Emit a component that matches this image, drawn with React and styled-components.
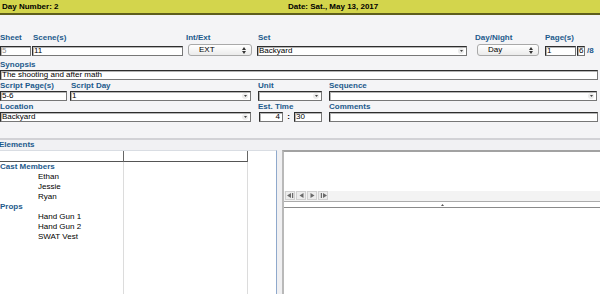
import React from "react";
import styled, { createGlobalStyle } from "styled-components";

const GlobalStyle = createGlobalStyle`
  html, body {
    margin: 0;
    padding: 0;
    background: #f4f4f6;
  }
  body {
    font-family: "Liberation Sans", Arial, sans-serif;
    font-size: 8px;
    color: #000;
    overflow: hidden;
  }
`;

const Page = styled.div`
  width: 600px;
  height: 294px;
  display: flex;
  flex-direction: column;
  overflow: hidden;
`;

const Header = styled.div`
  height: 13px;
  background: #d3d54c;
  border-bottom: 2px solid #5e5e1d;
  display: grid;
  grid-template-columns: 286px 1fr;
  padding-left: 2px;
  font-weight: bold;
  line-height: 13px;
  white-space: nowrap;
`;

const Form = styled.div`
  display: flex;
  flex-direction: column;
`;

const Row = styled.div`
  display: flex;
  align-items: flex-end;
  margin-top: ${(p) => p.$mt || 0}px;
`;

const Field = styled.div`
  display: flex;
  flex-direction: column;
  width: ${(p) => p.$w}px;
  margin-left: ${(p) => p.$ml || 0}px;
`;

const Label = styled.div`
  height: 10px;
  line-height: 10px;
  font-weight: bold;
  color: #1d5a8c;
  white-space: nowrap;
  padding-left: ${(p) => p.$pl || 0}px;
`;

const Slot = styled.div`
  height: ${(p) => p.$h || 10}px;
  display: flex;
  align-items: flex-end;
`;

const Input = styled.div`
  position: relative;
  box-sizing: border-box;
  height: 10px;
  width: ${(p) => (p.$w ? `${p.$w}px` : "100%")};
  margin-left: ${(p) => p.$ml || 0}px;
  background: #fff;
  border: 1px solid #777;
  border-top-color: #2e2e2e;
  border-left-color: #2e2e2e;
  box-shadow: inset 1px 1px 0 #b5b5b5;
  line-height: 8px;
  padding: 0 ${(p) => (p.$right ? 2 : 1)}px 0 1px;
  text-align: ${(p) => (p.$right ? "right" : "left")};
  color: ${(p) => p.$muted ? "#8a8a8a" : "#000"};
  white-space: nowrap;
  overflow: hidden;
`;

const DropArrow = styled.span`
  position: absolute;
  right: 2px;
  top: 1px;
  width: 6px;
  height: 6px;
  border-radius: 3px;
  background: #ececec;
  display: flex;
  align-items: center;
  justify-content: center;
`;

const SelectButton = styled.div`
  box-sizing: border-box;
  height: 12px;
  width: ${(p) => p.$w}px;
  margin-left: 2px;
  border: 1px solid #a9a9a9;
  border-radius: 3px;
  background: linear-gradient(#ffffff, #ebebeb);
  display: flex;
  align-items: center;
  justify-content: space-between;
  padding: 0 5px 0 10px;
  line-height: 10px;
`;

const Fraction = styled.span`
  margin-left: 2px;
  color: #1d5a8c;
  font-weight: bold;
  line-height: 10px;
`;

const Colon = styled.span`
  width: 11px;
  text-align: center;
  font-weight: bold;
  line-height: 10px;
`;

const Divider = styled.div`
  margin-top: 16px;
  height: 2px;
  background: #d2d2d6;
`;

const SectionTitle = styled.div`
  height: 10px;
  line-height: 10px;
  margin-left: -1px;
  font-weight: bold;
  color: #1d5a8c;
  background: #f1f1f3;
`;

const Panels = styled.div`
  flex: 1;
  display: flex;
  min-height: 0;
`;

const ElementList = styled.div`
  width: 277px;
  box-sizing: border-box;
  background: #fff;
  border-top: 1px solid #d9dde3;
  border-right: 1px solid #8fa9cc;
  display: flex;
`;

const Column = styled.div`
  width: ${(p) => p.$w}px;
  box-sizing: border-box;
  border-right: 1px solid #dcdcdc;
`;

const HeadCell = styled.div`
  height: 10px;
  border-bottom: 1px solid #555;
  box-shadow: 1px 0 0 #666;
`;

const GroupTitle = styled.div`
  height: 10px;
  line-height: 10px;
  font-weight: bold;
  color: #1d5a8c;
  white-space: nowrap;
`;

const Item = styled.div`
  height: 10px;
  line-height: 10px;
  padding-left: 38px;
  white-space: nowrap;
`;

const Splitter = styled.div`
  width: 5px;
  background: #f0f0f2;
`;

const Viewer = styled.div`
  flex: 1;
  background: #fff;
  border-top: 2px solid #a2a2a2;
  border-left: 2px solid #b9b9b9;
  display: flex;
  flex-direction: column;
`;

const ViewerTop = styled.div`
  height: 39px;
`;

const NavBar = styled.div`
  height: 10px;
  background: #f3f3f3;
  border-bottom: 1px solid #ababab;
  display: flex;
  padding-left: 1px;
`;

const NavButton = styled.div`
  width: 10px;
  height: 9px;
  box-sizing: border-box;
  border: 1px solid #d0d0d0;
  background: #ececec;
  margin-right: 1px;
  display: flex;
  align-items: center;
  justify-content: center;
`;

const Strip = styled.div`
  height: 5px;
  border-bottom: 1px solid #8a8a8a;
  display: flex;
  justify-content: center;
  align-items: center;
`;

const UpDown = () => (
  <svg width="4" height="7" viewBox="0 0 4 7">
    <polygon points="0,3 2,0 4,3" fill="#333" />
    <polygon points="0,4 2,7 4,4" fill="#333" />
  </svg>
);

const Drop = () => (
  <DropArrow>
    <svg width="3" height="2" viewBox="0 0 3 2">
      <polygon points="0,0 3,0 1.5,2" fill="#444" />
    </svg>
  </DropArrow>
);

const NavIcon = ({ kind }) => (
  <svg width="7" height="5" viewBox="0 0 7 5">
    {kind === "first" && (
      <>
        <polygon points="0,2.5 4,0 4,5" fill="#6a6a6a" />
        <rect x="5" y="0" width="1.2" height="5" fill="#6a6a6a" />
      </>
    )}
    {kind === "prev" && <polygon points="1.5,2.5 5.5,0 5.5,5" fill="#6a6a6a" />}
    {kind === "next" && <polygon points="5.5,2.5 1.5,0 1.5,5" fill="#6a6a6a" />}
    {kind === "last" && (
      <>
        <rect x="0.8" y="0" width="1.2" height="5" fill="#6a6a6a" />
        <polygon points="7,2.5 3,0 3,5" fill="#6a6a6a" />
      </>
    )}
  </svg>
);

const cast = ["Ethan", "Jessie", "Ryan"];
const props = ["Hand Gun 1", "Hand Gun 2", "SWAT Vest"];

export default function App() {
  return (
    <>
      <GlobalStyle />
      <Page>
        <Header>
          <span>Day Number: 2</span>
          <span>Date: Sat., May 13, 2017</span>
        </Header>

        <Form>
          <Row $mt={18}>
            <Field $w={31}>
              <Label>Sheet</Label>
              <Slot $h={13}>
                <Input $muted>5</Input>
              </Slot>
            </Field>
            <Field $w={151} $ml={1}>
              <Label $pl={1}>Scene(s)</Label>
              <Slot $h={13}>
                <Input>11</Input>
              </Slot>
            </Field>
            <Field $w={66} $ml={3}>
              <Label>Int/Ext</Label>
              <Slot $h={13}>
                <SelectButton $w={64}>
                  <span>EXT</span>
                  <UpDown />
                </SelectButton>
              </Slot>
            </Field>
            <Field $w={210} $ml={5}>
              <Label $pl={1}>Set</Label>
              <Slot $h={13}>
                <Input>
                  Backyard
                  <Drop />
                </Input>
              </Slot>
            </Field>
            <Field $w={64} $ml={8}>
              <Label>Day/Night</Label>
              <Slot $h={13}>
                <SelectButton $w={62}>
                  <span>Day</span>
                  <UpDown />
                </SelectButton>
              </Slot>
            </Field>
            <Field $w={55} $ml={6}>
              <Label>Page(s)</Label>
              <Slot $h={13}>
                <Input $w={31}>1</Input>
                <Input $w={8} $ml={1}>6</Input>
                <Fraction>/8</Fraction>
              </Slot>
            </Field>
          </Row>

          <Row $mt={4}>
            <Field $w={598}>
              <Label>Synopsis</Label>
              <Slot>
                <Input>The shooting and after math</Input>
              </Slot>
            </Field>
          </Row>

          <Row $mt={1}>
            <Field $w={67}>
              <Label>Script Page(s)</Label>
              <Slot>
                <Input>5-6</Input>
              </Slot>
            </Field>
            <Field $w={181} $ml={3}>
              <Label $pl={1}>Script Day</Label>
              <Slot>
                <Input>
                  1
                  <Drop />
                </Input>
              </Slot>
            </Field>
            <Field $w={64} $ml={7}>
              <Label>Unit</Label>
              <Slot>
                <Input>
                  <Drop />
                </Input>
              </Slot>
            </Field>
            <Field $w={268} $ml={7}>
              <Label>Sequence</Label>
              <Slot>
                <Input>
                  <Drop />
                </Input>
              </Slot>
            </Field>
          </Row>

          <Row $mt={1}>
            <Field $w={251}>
              <Label>Location</Label>
              <Slot>
                <Input>
                  Backyard
                  <Drop />
                </Input>
              </Slot>
            </Field>
            <Field $w={64} $ml={7}>
              <Label>Est. Time</Label>
              <Slot>
                <Input $w={24} $ml={1} $right>
                  4
                </Input>
                <Colon>:</Colon>
                <Input $w={28}>30</Input>
              </Slot>
            </Field>
            <Field $w={269} $ml={7}>
              <Label>Comments</Label>
              <Slot>
                <Input />
              </Slot>
            </Field>
          </Row>
        </Form>

        <Divider />
        <SectionTitle>Elements</SectionTitle>

        <Panels>
          <ElementList>
            <Column $w={124}>
              <HeadCell />
              <GroupTitle>Cast Members</GroupTitle>
              {cast.map((name) => (
                <Item key={name}>{name}</Item>
              ))}
              <GroupTitle>Props</GroupTitle>
              {props.map((name) => (
                <Item key={name}>{name}</Item>
              ))}
            </Column>
            <Column $w={124}>
              <HeadCell />
            </Column>
          </ElementList>
          <Splitter />
          <Viewer>
            <ViewerTop />
            <NavBar>
              <NavButton>
                <NavIcon kind="first" />
              </NavButton>
              <NavButton>
                <NavIcon kind="prev" />
              </NavButton>
              <NavButton>
                <NavIcon kind="next" />
              </NavButton>
              <NavButton>
                <NavIcon kind="last" />
              </NavButton>
            </NavBar>
            <Strip>
              <svg width="3" height="2" viewBox="0 0 3 2">
                <polygon points="0,2 1.5,0 3,2" fill="#555" />
              </svg>
            </Strip>
          </Viewer>
        </Panels>
      </Page>
    </>
  );
}
